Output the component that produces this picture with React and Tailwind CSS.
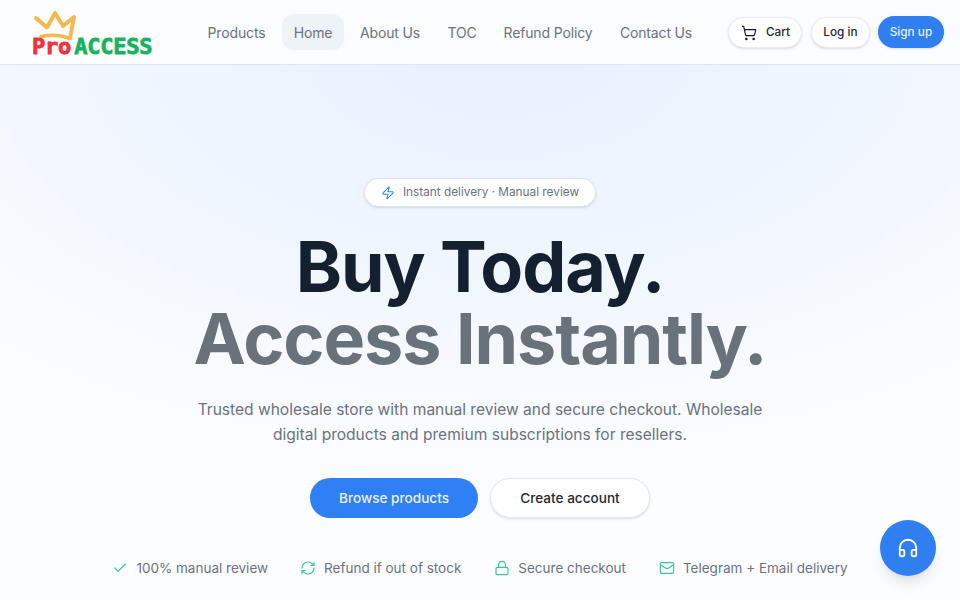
import React from "react";
import { ShoppingCart, Zap, Check, RefreshCw, Lock, Mail, Headphones } from "lucide-react";

const body = { fontFamily: '"Inter", "Noto Sans", sans-serif' };

const navItems = [
  ["Products", "w-[83px]", false],
  ["Home", "w-[62px]", true],
  ["About Us", "w-[84px]", false],
  ["TOC", "w-[52px]", false],
  ["Refund Policy", "w-[112px]", false],
  ["Contact Us", "w-[96px]", false],
];

const trust = [
  [Check, "100% manual review", "mr-[32px]"],
  [RefreshCw, "Refund if out of stock", "mr-[33px]"],
  [Lock, "Secure checkout", "mr-[33px]"],
  [Mail, "Telegram + Email delivery", ""],
];

function Logo() {
  return (
    <div className="relative w-[150px] h-[60px] ml-[16px] bg-white/30">
      <svg className="absolute left-[16px] top-[4px]" width="50" height="36" viewBox="32 4 50 36" fill="none">
        <path d="M36 16 L47 25.5 L55 11 L63 24 L74 15 L70 36" stroke="#f7b850" strokeWidth="4" strokeLinejoin="round" strokeLinecap="round" />
        <path d="M41 34.5 Q56 31 70 36.5" stroke="#f7b850" strokeWidth="3.5" strokeLinecap="round" />
      </svg>
      <div className="absolute left-[16px] top-[32px] flex items-baseline font-bold leading-[26px] text-[22px]" style={{ fontFamily: '"DejaVu Sans Mono", monospace' }}>
        <span className="text-[#f0313c] tracking-[-0.2px] [-webkit-text-stroke:0.8px_#f0313c]">Pro</span>
        <span className="text-[#17b35f] tracking-[-0.2px] ml-[3px] [-webkit-text-stroke:0.8px_#17b35f]">ACCESS</span>
      </div>
    </div>
  );
}

export default function App() {
  return (
    <div className="relative h-[600px] w-full overflow-hidden bg-[#fcfdff] bg-[radial-gradient(ellipse_90%_78%_at_52%_9%,#e8f1fd_0%,#f0f6fe_45%,#f8fbff_75%,#fcfdff_100%)]" style={body}>
      <header className="h-[65px] flex items-center border-b border-[#dfe5ee] bg-[#fbfcfe]">
        <div className="w-[179px] shrink-0"><Logo /></div>
        <nav className="flex items-center gap-1 ml-[16px]">
          {navItems.map(([label, w, active]) => (
            <a key={label} className={`${w} h-9 flex items-center justify-center rounded-xl text-[14px] tracking-[-0.15px] text-[#6b7280] ${active ? "bg-[#eef3f7]" : ""}`}>
              {label}
            </a>
          ))}
        </nav>
        <div className="flex items-center ml-[24px] text-[11.8px] font-medium">
          <button className="w-[74px] h-[31px] flex items-center justify-center gap-[9px] rounded-full bg-white border border-[#e8ebef] shadow-sm text-[#1f2937] pt-px pl-[2px]">
            <ShoppingCart size={16} strokeWidth={1.75} className="text-[#111827] -ml-[1px]" />
            Cart
          </button>
          <button className="w-[59px] h-[31px] ml-[9px] rounded-full bg-white border border-[#e8ebef] shadow-sm text-[#1f2937] pt-px">Log in</button>
          <button className="w-[66px] h-[32px] ml-[8px] rounded-full bg-[#2f7ff0] text-[#e6f0ff] shadow-sm pt-px">Sign up</button>
        </div>
      </header>

      <main className="flex flex-col items-center pt-[113px]">
        <div className="w-[232px] h-[29px] flex items-center justify-center gap-[8px] rounded-full bg-white border border-[#e2e6ec] shadow-sm text-[11.8px] text-[#6b7280]">
          <Zap size={14} strokeWidth={1.75} className="text-[#2f7ff0]" />
          Instant delivery · Manual review
        </div>
        <h1 className="mt-[24px] text-center font-bold text-[70px] leading-[72px] tracking-[-1.05px]">
          <span className="block text-[#14202f]">Buy Today.</span>
          <span className="block text-[#69717b]">Access Instantly.</span>
        </h1>
        <p className="mt-[22px] w-[600px] text-center text-[15.55px] leading-[25px] text-[#6b7280]">
          Trusted wholesale store with manual review and secure checkout. Wholesale
          <br />
          digital products and premium subscriptions for resellers.
        </p>
        <div className="mt-[31px] flex items-center gap-[12px] text-[13.6px] font-medium">
          <button className="w-[168px] h-[40px] rounded-full bg-[#2f7ff5] text-[#eaf2ff]">Browse products</button>
          <button className="w-[160px] h-[40px] rounded-full bg-white border border-[#e4e7ec] shadow-sm text-[#1f2937]">Create account</button>
        </div>
        <div className="mt-[40px] flex items-center text-[13.5px] text-[#6b7280]">
          {trust.map(([Icon, label, mr]) => (
            <div key={label} className={`flex items-center gap-[8px] ${mr}`}>
              <Icon size={16} strokeWidth={1.75} className="text-[#3ec493]" />
              {label}
            </div>
          ))}
        </div>
      </main>

      <button className="absolute left-[880px] top-[520px] w-14 h-14 rounded-full bg-[#2f7ff0] flex items-center justify-center shadow-lg text-white">
        <Headphones size={22} strokeWidth={2} />
      </button>
    </div>
  );
}
